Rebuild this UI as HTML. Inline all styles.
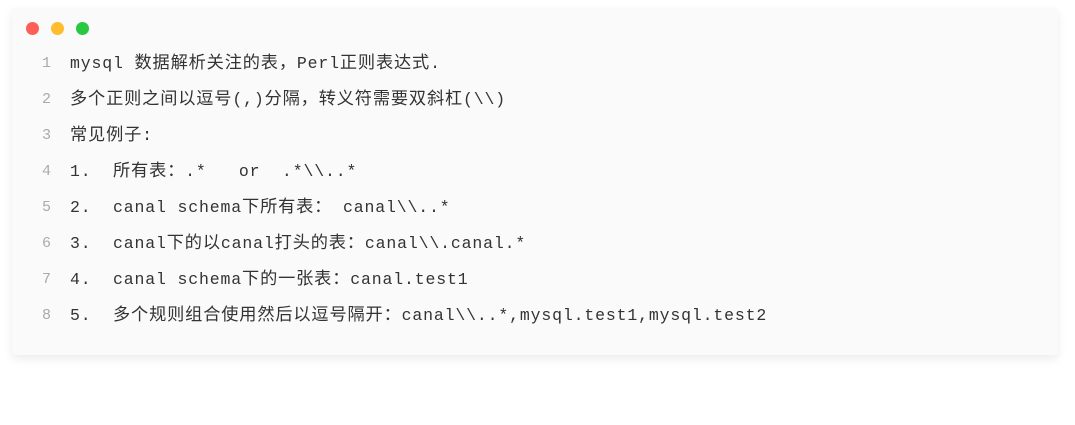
<!DOCTYPE html>
<html><head><meta charset="utf-8"><style>
html,body{margin:0;padding:0;background:#fff;width:1075px;height:425px;overflow:hidden}
.card{position:absolute;left:12px;top:8px;width:1046px;height:347px;background:#fafafa;border-radius:4px;box-shadow:0 4px 10px rgba(0,0,0,0.08)}
.dot{position:absolute;top:14px;width:13px;height:13px;border-radius:50%}
.line{position:absolute;left:0;height:36px;line-height:36px;font-family:"Liberation Mono","Noto Sans CJK SC",monospace;font-size:16.5px;color:#333;white-space:pre;letter-spacing:0.85px}
.n{position:absolute;left:27px;width:12px;text-align:right;color:#aaa;font-size:15px;letter-spacing:0}
.t{position:absolute;left:58px}
b{font-weight:normal;font-size:17.2px}
</style></head><body>
<div class="card">
<div class="dot" style="left:14px;background:#fd5f57"></div>
<div class="dot" style="left:39px;background:#febc2e"></div>
<div class="dot" style="left:64px;background:#28c840"></div>
<div class="line" style="top:38px"><span class="n">1</span><span class="t">mysql <b>数据解析关注的表，</b>Perl<b>正则表达式</b>.</span></div>
<div class="line" style="top:74px"><span class="n">2</span><span class="t"><b>多个正则之间以逗号</b>(,)<b>分隔，转义符需要双斜杠</b>(\\)</span></div>
<div class="line" style="top:110px"><span class="n">3</span><span class="t"><b>常见例子</b>:</span></div>
<div class="line" style="top:146px"><span class="n">4</span><span class="t">1.  <b>所有表：</b>.*   or  .*\\..*</span></div>
<div class="line" style="top:182px"><span class="n">5</span><span class="t">2.  canal schema<b>下所有表：</b> canal\\..*</span></div>
<div class="line" style="top:218px"><span class="n">6</span><span class="t">3.  canal<b>下的以</b>canal<b>打头的表：</b>canal\\.canal.*</span></div>
<div class="line" style="top:254px"><span class="n">7</span><span class="t">4.  canal schema<b>下的一张表：</b>canal.test1</span></div>
<div class="line" style="top:290px"><span class="n">8</span><span class="t">5.  <b>多个规则组合使用然后以逗号隔开：</b>canal\\..*,mysql.test1,mysql.test2</span></div>
</div>
</body></html>
